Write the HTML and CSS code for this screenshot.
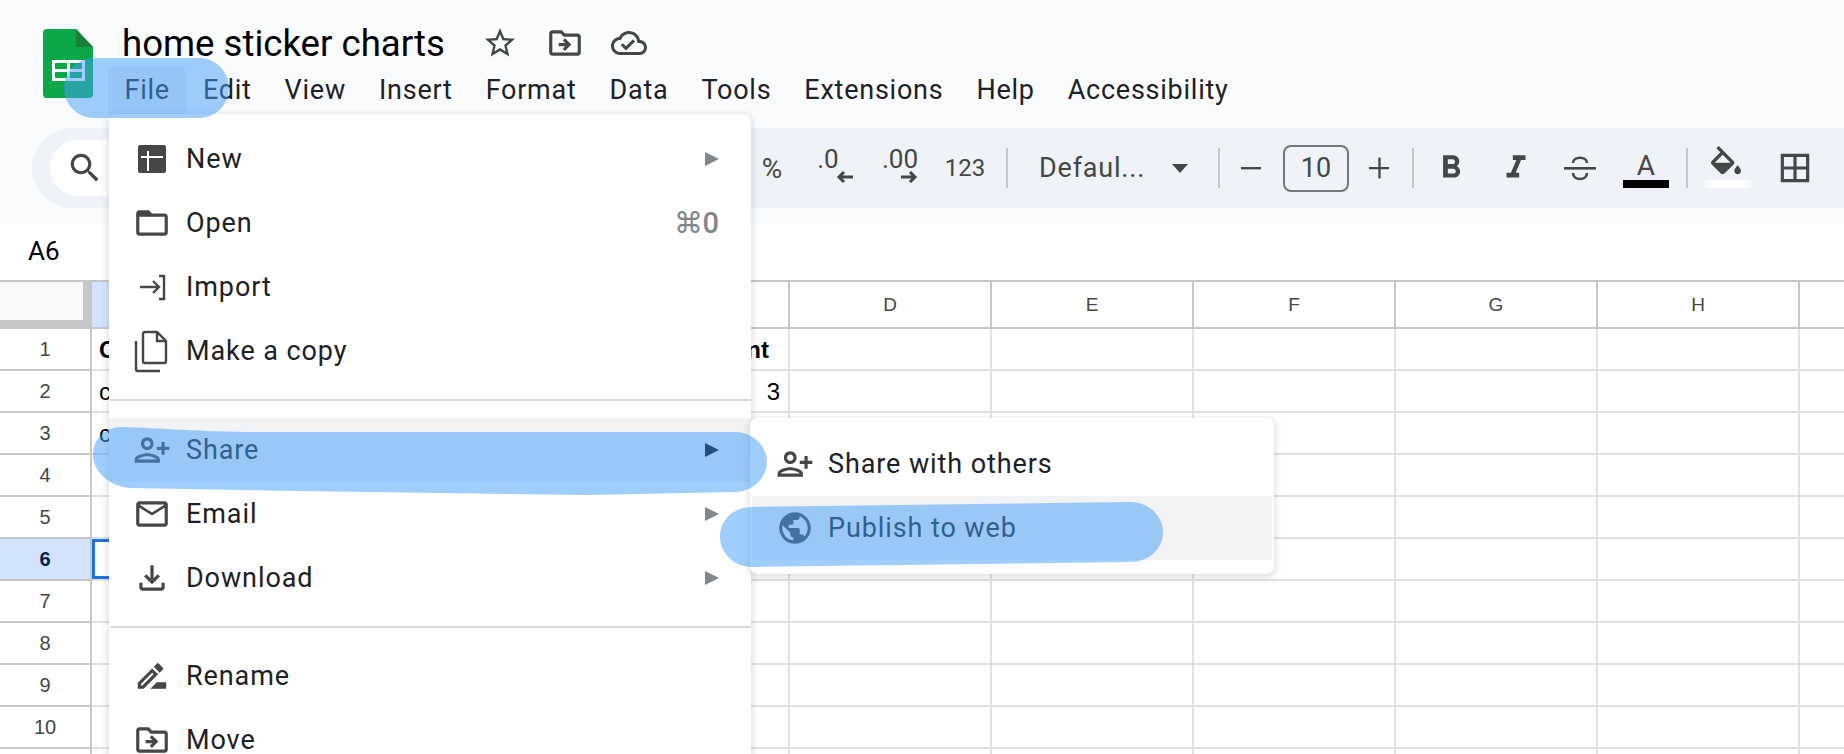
FILE: index.html
```html
<!DOCTYPE html>
<html lang="en">
  <head>
    <title>home sticker charts - Google Sheets</title>
    <link rel="stylesheet" href="styles.css">
  </head>
  <body>
    <header class="top">
      <svg class="logo" viewBox="0 0 50 69">
        <path fill="#0ba84a" d="M4 0H33L50 18V65a4 4 0 0 1-4 4H4a4 4 0 0 1-4-4V4a4 4 0 0 1 4-4z"/>
        <path fill="#188038" d="M33 0L50 18H33z"/>
        <path fill="#fff" d="M9 31H42V52H9z"/>
        <path fill="#0ba84a" d="M12 34H24V40H12zM27 34H39V40H27zM12 43H24V49H12zM27 43H39V49H27z"/>
      </svg>
      <div class="docinfo">
        <div class="titlerow">
          <span class="doctitle">home sticker charts</span>
          <svg class="ic star" viewBox="0 0 24 24"><path d="M22 9.24l-7.19-.62L12 2 9.19 8.63 2 9.24l5.46 4.73L5.82 21 12 17.27 18.18 21l-1.63-7.03L22 9.24zM12 15.4l-3.76 2.27 1-4.28-3.32-2.88 4.38-.38L12 6.1l1.71 4.04 4.38.38-3.32 2.88 1 4.28L12 15.4z"/></svg>
          <svg class="ic movefolder" viewBox="0 0 24 24"><path d="M20 6h-8l-2-2H4c-1.1 0-2 .9-2 2v12c0 1.1.9 2 2 2h16c1.1 0 2-.9 2-2V8c0-1.1-.9-2-2-2zm0 12H4V6h5.17l2 2H20v10zm-8.01-9l-1.41 1.41L12.16 12H8v2h4.16l-1.59 1.59L11.99 17 16 13.01 11.99 9z"/></svg>
          <svg class="ic cloud" viewBox="0 0 24 24"><path d="M19.35 10.04C18.67 6.59 15.64 4 12 4 9.11 4 6.6 5.64 5.35 8.04 2.34 8.36 0 10.91 0 14c0 3.31 2.69 6 6 6h13c2.76 0 5-2.24 5-5 0-2.64-2.05-4.78-4.65-4.96zM19 18H6c-2.21 0-4-1.79-4-4 0-2.05 1.53-3.76 3.56-3.97l1.07-.11.5-.95C8.08 7.14 9.94 6 12 6c2.62 0 4.88 1.86 5.39 4.43l.3 1.5 1.53.11c1.56.1 2.78 1.41 2.78 2.96 0 1.65-1.35 3-3 3zm-9-3.82l-2.09-2.09L6.5 13.5 10 17l6.01-6.01-1.41-1.41z"/></svg>
        </div>
        <nav class="menubar">
          <span class="active">File</span>
          <span>Edit</span>
          <span>View</span>
          <span>Insert</span>
          <span>Format</span>
          <span>Data</span>
          <span>Tools</span>
          <span>Extensions</span>
          <span>Help</span>
          <span>Accessibility</span>
        </nav>
      </div>
    </header>

    <div class="toolbarwrap">
      <div class="toolbar">
        <div class="search">
          <svg class="ic search-ic" viewBox="0 0 24 24"><path d="M15.5 14h-.79l-.28-.27C15.41 12.59 16 11.11 16 9.5 16 5.91 13.09 3 9.5 3S3 5.91 3 9.5 5.91 16 9.5 16c1.61 0 3.09-.59 4.23-1.57l.27.28v.79l5 4.99L20.49 19l-4.99-5zm-6 0C7.01 14 5 11.99 5 9.5S7.01 5 9.5 5 14 7.01 14 9.5 11.99 14 9.5 14z"/></svg>
        </div>
        <div class="tool t-num percent">%</div>
        <div class="tool t-num decimal">
          <span class="dec-less">.0</span>
          <svg class="dec-arrow" viewBox="0 0 18 12"><path d="M17 6H3M8 1L3 6l5 5"/></svg>
        </div>
        <div class="tool t-num decimal">
          <span>.00</span>
          <svg class="dec-arrow" viewBox="0 0 18 12"><path d="M1 6h14M10 1l5 5-5 5"/></svg>
        </div>
        <div class="tool t-num plain">123</div>
        <div class="sep first"></div>
        <div class="fontpick">
          <span>Defaul...</span>
          <i class="caret"></i>
        </div>
        <div class="sep"></div>
        <div class="tool t-minus">
          <svg class="ic small" viewBox="0 0 22 22"><path d="M0 10h21v2.4H0z"/></svg>
        </div>
        <div class="fontsize">10</div>
        <div class="tool t-plus">
          <svg class="ic small" viewBox="0 0 22 22"><path d="M0 10h9.8V0h2.4v10H21v2.4h-8.8V22H9.800v-9.600H0z"/></svg>
        </div>
        <div class="sep tight"></div>
        <div class="tool t-bold">
          <svg class="ic fmt" viewBox="0 0 24 24"><path d="M15.6 10.79c.97-.67 1.65-1.77 1.65-2.79 0-2.26-1.75-4-4-4H7v14h7.04c2.09 0 3.71-1.7 3.71-3.79 0-1.52-.86-2.82-2.15-3.42zM10 6.500h3c.83 0 1.5.67 1.5 1.5s-.67 1.5-1.5 1.5h-3v-3zm3.500 9H10v-3h3.500c.83 0 1.5.67 1.5 1.5s-.67 1.500-1.500 1.500z"/></svg>
        </div>
        <div class="tool t-italic">
          <svg class="ic fmt" viewBox="0 0 24 24"><path d="M10 4v3h2.210l-3.420 8H6v3h8v-3h-2.210l3.420-8H18V4z"/></svg>
        </div>
        <div class="tool t-strike">
          <svg class="ic strike" viewBox="0 0 32 26"><path d="M0 12h32v2.600H0z"/><path class="line" d="M9 8c0-7 14-7 14 0M9 18c0 8 14 8 14 0"/></svg>
        </div>
        <div class="tool t-color">
          <span class="letter">A</span>
          <i class="swatch black"></i>
        </div>
        <div class="sep short"></div>
        <div class="tool t-fill">
          <svg class="ic fill" viewBox="0 0 24 24"><path d="M16.560 8.940L7.620 0 6.210 1.410l2.380 2.380-5.150 5.150c-.59.59-.59 1.540 0 2.120l5.500 5.500c.29.29.68.44 1.060.44s.77-.15 1.060-.44l5.500-5.500c.59-.58.59-1.530 0-2.120zM5.210 10L10 5.210 14.790 10H5.210zM19 11.500s-2 2.170-2 3.500c0 1.100.9 2 2 2s2-.9 2-2c0-1.330-2-3.500-2-3.500z"/></svg>
          <i class="swatch white"></i>
        </div>
        <div class="tool t-borders">
          <svg class="ic fmt" viewBox="0 0 24 24"><path d="M3 3v18h18V3H3zm8 16H5v-6h6v6zm0-8H5V5h6v6zm8 8h-6v-6h6v6zm0-8h-6V5h6v6z"/></svg>
        </div>
      </div>
    </div>

    <div class="formulabar">A6</div>

    <table class="grid">
      <tr class="heads">
        <th class="corner"></th><th class="sel">A</th><th>B</th><th>C</th><th>D</th><th>E</th><th>F</th><th>G</th><th>H</th><th></th>
      </tr>
      <tr><th>1</th><td class="bold">C</td><td></td><td class="bold num hdr">Count</td><td></td><td></td><td></td><td></td><td></td><td></td></tr>
      <tr><th>2</th><td>c</td><td></td><td class="num">3</td><td></td><td></td><td></td><td></td><td></td><td></td></tr>
      <tr><th>3</th><td>c</td><td></td><td></td><td></td><td></td><td></td><td></td><td></td><td></td></tr>
      <tr><th>4</th><td></td><td></td><td></td><td></td><td></td><td></td><td></td><td></td><td></td></tr>
      <tr><th>5</th><td></td><td></td><td></td><td></td><td></td><td></td><td></td><td></td><td></td></tr>
      <tr><th class="sel">6</th><td class="cursor"></td><td></td><td></td><td></td><td></td><td></td><td></td><td></td><td></td></tr>
      <tr><th>7</th><td></td><td></td><td></td><td></td><td></td><td></td><td></td><td></td><td></td></tr>
      <tr><th>8</th><td></td><td></td><td></td><td></td><td></td><td></td><td></td><td></td><td></td></tr>
      <tr><th>9</th><td></td><td></td><td></td><td></td><td></td><td></td><td></td><td></td><td></td></tr>
      <tr><th>10</th><td></td><td></td><td></td><td></td><td></td><td></td><td></td><td></td><td></td></tr>
      <tr><th></th><td></td><td></td><td></td><td></td><td></td><td></td><td></td><td></td><td></td></tr>
    </table>

    <div class="menu filemenu">
      <div class="item">
        <svg class="ic" viewBox="0 0 38 38"><path d="M7 5h24a2 2 0 0 1 2 2v24a2 2 0 0 1-2 2H7a2 2 0 0 1-2-2V7a2 2 0 0 1 2-2zM14 11v5H8v2h6v13h2V18h14v-2H16V11z" fill-rule="evenodd"/></svg>
        <span>New</span><i class="arrow"></i>
      </div>
      <div class="item">
        <svg class="ic" viewBox="0 0 24 24"><path d="M20 6h-8l-2-2H4c-1.100 0-1.990.9-1.990 2L2 18c0 1.100.9 2 2 2h16c1.100 0 2-.9 2-2V8c0-1.100-.9-2-2-2zm0 12H4V8h16v10z"/></svg>
        <span>Open</span><span class="shortcut">⌘0</span>
      </div>
      <div class="item">
        <svg class="ic line" viewBox="0 0 38 38"><path d="M7 19h19M20 13l6 6-6 6M26 8h5v23h-5"/></svg>
        <span>Import</span>
      </div>
      <div class="item">
        <svg class="ic copy" viewBox="2 0 38 44"><path d="M14 3h12l9 9v20a2 2 0 0 1-2 2H14a2 2 0 0 1-2-2V5a2 2 0 0 1 2-2zM26 3v9h9M5 12v28a2 2 0 0 0 2 2h22"/></svg>
        <span>Make a copy</span>
      </div>
      <div class="divider"></div>
      <div class="item hover">
        <svg class="ic person" viewBox="0 0 24 24"><path transform="matrix(-1 0 0 1 24 0)" d="M15 12c2.210 0 4-1.790 4-4s-1.790-4-4-4-4 1.790-4 4 1.790 4 4 4zm0-6c1.100 0 2 .9 2 2s-.9 2-2 2-2-.9-2-2 .9-2 2-2zm0 8c-2.670 0-8 1.340-8 4v2h16v-2c0-2.660-5.330-4-8-4zm-6 4c.22-.72 3.310-2 6-2 2.700 0 5.800 1.290 6 2H9zm-3-3v-3h3v-2H6V7H4v3H1v2h3v3h2z"/></svg>
        <span>Share</span><i class="arrow dark"></i>
      </div>
      <div class="item">
        <svg class="ic" viewBox="0 0 24 24"><path d="M20 4H4c-1.100 0-1.990.9-1.990 2L2 18c0 1.100.9 2 2 2h16c1.100 0 2-.9 2-2V6c0-1.100-.9-2-2-2zm0 14H4V8l8 5 8-5v10zm-8-7L4 6h16l-8 5z"/></svg>
        <span>Email</span><i class="arrow"></i>
      </div>
      <div class="item">
        <svg class="ic" viewBox="0 0 24 24"><path d="M18 15v3H6v-3H4v3c0 1.100.9 2 2 2h12c1.100 0 2-.9 2-2v-3h-2zm-1-4l-1.410-1.410L13 12.170V4h-2v8.170L8.410 9.590 7 11l5 5 5-5z"/></svg>
        <span>Download</span><i class="arrow"></i>
      </div>
      <div class="divider low"></div>
      <div class="item">
        <svg class="ic" viewBox="0 0 24 24"><path d="M15 16l-4 4h10v-4h-6zM12.060 7.190L3 16.250V20h3.750l9.060-9.060-3.750-3.750zM5.920 18H5v-.92l7.060-7.060.92.92L5.920 18zM18.710 8.040c.39-.39.39-1.020 0-1.410l-2.340-2.340c-.2-.2-.45-.29-.71-.29-.25 0-.51.1-.7.29l-1.830 1.830 3.750 3.750 1.830-1.830z"/></svg>
        <span>Rename</span>
      </div>
      <div class="item">
        <svg class="ic" viewBox="0 0 24 24"><path d="M20 6h-8l-2-2H4c-1.100 0-2 .9-2 2v12c0 1.100.9 2 2 2h16c1.100 0 2-.9 2-2V8c0-1.100-.9-2-2-2zm0 12H4V6h5.170l2 2H20v10zm-8.010-9l-1.410 1.410L12.160 12H8v2h4.160l-1.590 1.590L11.990 17 16 13.010 11.990 9z"/></svg>
        <span>Move</span>
      </div>
    </div>

    <div class="menu submenu">
      <div class="item">
        <svg class="ic person" viewBox="0 0 24 24"><path transform="matrix(-1 0 0 1 24 0)" d="M15 12c2.210 0 4-1.790 4-4s-1.790-4-4-4-4 1.790-4 4 1.790 4 4 4zm0-6c1.100 0 2 .9 2 2s-.9 2-2 2-2-.9-2-2 .9-2 2-2zm0 8c-2.670 0-8 1.340-8 4v2h16v-2c0-2.660-5.330-4-8-4zm-6 4c.22-.72 3.310-2 6-2 2.700 0 5.800 1.290 6 2H9zm-3-3v-3h3v-2H6V7H4v3H1v2h3v3h2z"/></svg>
        <span>Share with others</span>
      </div>
      <div class="item hover">
        <svg class="ic" viewBox="0 0 24 24"><path d="M12 2C6.480 2 2 6.480 2 12s4.480 10 10 10 10-4.480 10-10S17.520 2 12 2zm-1 17.930c-3.950-.49-7-3.850-7-7.930 0-.62.08-1.210.21-1.790L9 15v1c0 1.100.9 2 2 2v1.930zm6.900-2.540c-.26-.81-1-1.390-1.900-1.390h-1v-3c0-.55-.45-1-1-1H8v-2h2c.55 0 1-.45 1-1V7h2c1.100 0 2-.9 2-2v-.41c2.930 1.190 5 4.060 5 7.410 0 2.080-.8 3.970-2.100 5.390z"/></svg>
        <span>Publish to web</span>
      </div>
    </div>

    <!-- hand drawn marker strokes on top of the screenshot -->
    <svg class="marker" viewBox="0 0 1844 754">
      <rect x="64" y="58" width="165" height="60" rx="30"/>
      <path d="M122 427C160 428 200 432 260 432L735 432C755 432 767 448 767 462C767 478 752 492 735 492L588 495L300 491L130 488C108 486 93 470 93 456C93 438 105 427 122 427Z"/>
      <path d="M752 507L1130 502C1150 502 1163 517 1163 532C1163 548 1150 562 1130 562L752 567C733 567 720 552 720 537C720 520 733 507 752 507Z"/>
    </svg>
  </body>
</html>
```

FILE: styles.css
```css
body {
  margin: 0;
  height: 754px;
  overflow: hidden;
  position: relative;
  background-color: white;
  color: #202124;
  font-family: Roboto, sans-serif;
}

.ic {
  width: 38px;
  height: 38px;
  fill: #444746;
  flex-shrink: 0;
}
.ic.line {
  fill: none;
  stroke: #444746;
  stroke-width: 2.4;
}

/* title + menu bar */
.top {
  height: 128px;
  background-color: #f9fbfd;
  display: flex;
  padding-left: 43px;
  box-sizing: border-box;
}
.logo {
  width: 50px;
  height: 69px;
  margin-top: 29px;
}
.docinfo {
  margin-left: 15px;
}
.titlerow {
  height: 66px;
  display: flex;
  align-items: center;
  padding-left: 14px;
  padding-top: 20px;
  box-sizing: border-box;
}
.doctitle {
  font-size: 36.6px;
  color: #000;
  width: 360px;
}
.star {
  width: 36px;
  height: 36px;
}
.movefolder {
  margin-left: 28px;
}
.cloud {
  width: 36px;
  height: 36px;
  margin-left: 27px;
}
.menubar {
  display: flex;
  height: 48px;
  font-size: 27px;
  line-height: 48px;
  letter-spacing: 0.75px;
}
.menubar span {
  padding: 0 16.5px;
}
.menubar .active {
  background-color: #e9ecef;
  border-radius: 8px 8px 0 0;
}

/* toolbar */
.toolbarwrap {
  height: 96px;
  background-color: #f9fbfd;
  padding-left: 32px;
  box-sizing: border-box;
}
.toolbar {
  height: 80px;
  background-color: #eff3f8;
  border-radius: 40px 0 0 40px;
  display: flex;
  align-items: center;
  color: #444746;
}
.search {
  width: 690px;
  height: 56px;
  margin-left: 18px;
  background-color: white;
  border-radius: 28px;
  display: flex;
  align-items: center;
  padding-left: 16px;
  box-sizing: border-box;
}
.tool {
  display: flex;
  align-items: center;
  justify-content: center;
  position: relative;
  height: 56px;
}
.t-num {
  width: 64px;
  font-size: 24px;
}
.t-num.plain {
  padding-left: 2px;
  box-sizing: border-box;
}
.percent {
  font-size: 28px;
}
.decimal {
  flex-direction: column;
  font-size: 26px;
  line-height: 22px;
  padding-bottom: 6px;
  box-sizing: border-box;
}
.dec-less {
  position: relative;
  left: -8px;
}
.dec-arrow {
  width: 18px;
  height: 12px;
  fill: none;
  stroke: #444746;
  stroke-width: 3;
  position: relative;
  left: 9px;
  top: 1px;
}
.sep {
  width: 2px;
  height: 40px;
  background-color: #c7c7c7;
  margin-left: 30px;
}
.sep.first {
  margin-left: 10px;
}
.sep.tight {
  margin-left: 3px;
}
.sep.short {
  margin-left: 10px;
}
.fontpick {
  width: 149px;
  margin-left: 31px;
  display: flex;
  align-items: center;
  justify-content: space-between;
  font-size: 27px;
  letter-spacing: 0.8px;
}
.caret {
  width: 0;
  height: 0;
  border-left: 8px solid transparent;
  border-right: 8px solid transparent;
  border-top: 9px solid #444746;
}
.t-minus {
  width: 62px;
}
.t-plus {
  width: 60px;
}
.small {
  width: 21px;
  height: 22px;
}
.fontsize {
  width: 66px;
  height: 47px;
  margin-left: 1px;
  border: 2px solid #747775;
  border-radius: 8px;
  box-sizing: border-box;
  display: flex;
  align-items: center;
  justify-content: center;
  font-size: 27px;
}
.t-bold {
  width: 74px;
}
.t-italic {
  width: 56px;
}
.t-strike {
  width: 72px;
}
.strike {
  width: 32px;
  height: 26px;
}
.strike .line {
  fill: none;
  stroke: #444746;
  stroke-width: 2.6;
}
.t-color {
  width: 60px;
}
.letter {
  font-size: 28px;
  position: absolute;
  top: 11px;
  line-height: 30px;
}
.swatch {
  position: absolute;
  left: 7px;
  bottom: 8px;
  width: 46px;
  height: 8px;
}
.swatch.black {
  background-color: #000;
}
.swatch.white {
  background-color: #fff;
  left: 17px;
}
.t-fill {
  width: 80px;
}
.fill {
  width: 40px;
  height: 40px;
  position: absolute;
  left: 18px;
  top: 6px;
}
.t-borders {
  width: 54px;
}

/* name box */
.formulabar {
  height: 56px;
  line-height: 54px;
  padding-left: 28px;
  font-size: 26px;
  color: #000;
  box-sizing: border-box;
}

/* sheet */
.grid {
  border-collapse: separate;
  border-spacing: 0;
  table-layout: fixed;
  width: 2002px;
  font-family: "Liberation Sans", Arial, sans-serif;
  border-top: 2px solid #c7c7c7;
}
.grid th,
.grid td {
  box-sizing: border-box;
  height: 42px;
  padding: 0;
  border-right: 2px solid #e1e1e1;
  border-bottom: 2px solid #e1e1e1;
}
.grid th {
  font-weight: normal;
  font-size: 20px;
  color: #444746;
  border-right-color: #c7c7c7;
  border-bottom-color: #c7c7c7;
  width: 202px;
}
.grid tr > th:first-child {
  width: 92px;
}
.grid .heads th {
  height: 47px;
  font-size: 19px;
}
.grid .heads th:nth-child(2),
.grid .heads th:nth-child(4) {
  width: 233px;
}
.grid .heads th:nth-child(3) {
  width: 232px;
}
.grid .heads .corner {
  background-color: #f8f9fa;
  border-right-width: 9px;
  border-bottom-width: 9px;
}
.grid th.sel {
  background-color: #d3e3fd;
}
.grid tr > th.sel:first-child {
  font-weight: bold;
  color: #041e49;
}
.grid td {
  font-size: 24px;
  color: #000;
  padding: 2px 0 0 7px;
  white-space: nowrap;
  overflow: hidden;
}
.grid td.bold {
  font-weight: bold;
}
.grid td.num {
  text-align: right;
  padding-right: 8px;
}
.grid td.hdr {
  padding-right: 19px;
}
.grid td.cursor {
  box-shadow: inset 0 0 0 3px #1a73e8;
}

/* open menus */
.menu {
  position: absolute;
  background-color: white;
  border-radius: 8px;
  box-shadow: 0 2px 6px 2px rgba(60, 64, 67, 0.15);
  font-size: 27px;
  letter-spacing: 0.9px;
}
.filemenu {
  left: 109px;
  top: 114px;
  width: 642px;
  padding-top: 13px;
}
.submenu {
  left: 750px;
  top: 418px;
  width: 524px;
  padding: 14px 0;
  box-sizing: border-box;
}
.item {
  height: 64px;
  display: flex;
  align-items: center;
  gap: 15px;
  padding: 0 32px 0 24px;
  box-sizing: border-box;
}
.submenu .item {
  padding-left: 24px;
  gap: 14px;
  margin: 0 2px;
}
.item.hover {
  background-color: #f1f3f4;
}
.copy {
  fill: none;
  stroke: #444746;
  stroke-width: 2.4;
  height: 44px;
}
.arrow {
  margin-left: auto;
  width: 0;
  height: 0;
  border-left: 14px solid #80868b;
  border-top: 7.500px solid transparent;
  border-bottom: 7.500px solid transparent;
}
.arrow.dark {
  border-left-color: #000;
}
.shortcut {
  margin-left: auto;
  color: #80868b;
  font-weight: 500;
  font-size: 29px;
  letter-spacing: 0;
}
.divider {
  height: 2px;
  margin: 16px 0 17px 1px;
  background-color: #dadce0;
}
.divider.low {
  margin-bottom: 16px;
}

/* marker strokes */
.marker {
  position: absolute;
  left: 0;
  top: 0;
  width: 1844px;
  height: 754px;
  fill: rgba(66, 158, 250, 0.5);
  pointer-events: none;
}
```
